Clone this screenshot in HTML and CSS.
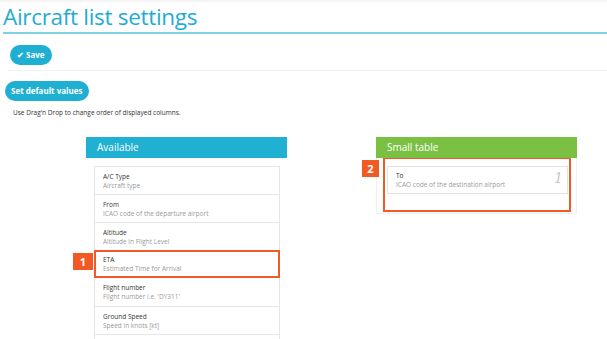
FILE: index.html
```html
<!DOCTYPE html>
<html lang="en">
<head>
    <meta charset="UTF-8">
    <title>Aircraft list settings</title>
    <link rel="stylesheet" href="styles.css">
</head>
<body>
    <h1 class="page-title">Aircraft list settings</h1>
    <div class="toolbar">
        <button class="btn"><span class="check">&#10004;</span>&nbsp;Save</button>
    </div>
    <div class="defaults">
        <button class="btn">Set default values</button>
    </div>
    <p class="hint">Use Drag'n Drop to change order of displayed columns.</p>

    <div class="columns">
        <div class="column">
            <div class="column-head available">Available</div>
            <ul class="field-list">
                <li class="field"><b>A/C Type</b><span>Aircraft type</span></li>
                <li class="field"><b>From</b><span>ICAO code of the departure airport</span></li>
                <li class="field"><b>Altitude</b><span>Altitude in Flight Level</span></li>
                <li class="field marked"><b>ETA</b><span>Estimated Time for Arrival</span><i class="badge">1</i></li>
                <li class="field"><b>Flight number</b><span>Flight number i.e. 'DY311'</span></li>
                <li class="field"><b>Ground Speed</b><span>Speed in knots [kt]</span></li>
                <li class="field"></li>
            </ul>
        </div>
        <div class="column">
            <div class="column-head small">Small table</div>
            <div class="drop-box">
                <div class="drop-zone">
                    <div class="field placed"><b>To</b><span>ICAO code of the destination airport</span><em class="order">1</em></div>
                    <i class="badge badge-2">2</i>
                </div>
            </div>
        </div>
    </div>
</body>
</html>
```

FILE: styles.css
```css
* {
    margin: 0;
    padding: 0;
    box-sizing: border-box;
}
body, html {
    height: 100%;
    font-family: "Open Sans", "DejaVu Sans", sans-serif;
    background-color: #fff;
    overflow: hidden;
}
body {
    border-top: 2px solid #f4f4f4;
}
.page-title {
    margin-left: 3px;
    height: 32px;
    padding-top: 1px;
    font-size: 22.5px;
    font-weight: 400;
    letter-spacing: -0.3px;
    color: #1fadd1;
    line-height: 28px;
    border-bottom: 2px solid #7fd2e3;
}
.toolbar {
    display: flex;
    margin-left: 8px;
    padding: 11px 0 5px 2px;
    border-bottom: 1px solid #f2f2f2;
}
.btn {
    height: 20px;
    padding: 0 7px;
    background-color: #1eafd2;
    color: #fff;
    border: none;
    border-radius: 10px;
    font-family: "Open Sans", sans-serif;
    font-size: 8px;
    font-weight: 700;
    line-height: 20px;
    cursor: pointer;
}
.check {
    font-size: 8px;
}
.defaults {
    display: flex;
    padding: 10px 0 0 5px;
}
.defaults .btn {
    padding: 0 7px 0 6px;
}
.hint {
    margin: 7px 0 0 13px;
    font-size: 6.5px;
    color: #333;
    line-height: 10px;
}
.columns {
    display: grid;
    grid-template-columns: 201px 201px;
    column-gap: 89px;
    margin: 19px 0 0 86px;
}
.column-head {
    height: 21px;
    padding-left: 11px;
    color: #fff;
    font-size: 10px;
    line-height: 21px;
}
.available {
    background-color: #1fb0d2;
}
.small {
    background-color: #7ac143;
}
.field-list {
    list-style: none;
    margin: 8px 7px 0 8px;
    border-left: 1px solid #e6e6e6;
    border-right: 1px solid #e6e6e6;
}
.field {
    position: relative;
    display: flex;
    flex-direction: column;
    justify-content: center;
    height: 28px;
    padding-left: 8px;
    border-top: 1px solid #e6e6e6;
    font-size: 6.5px;
    line-height: 9px;
}
.field b {
    font-weight: 400;
    color: #333;
}
.field span {
    color: #9a9a9a;
}
.field.marked {
    border: 2px solid #f05a28;
    margin: 0 -1px;
    padding-left: 7px;
}
.field.marked + .field {
    border-top: none;
}
.badge {
    position: absolute;
    left: -23px;
    top: 1px;
    width: 20px;
    height: 17px;
    background-color: #f15a22;
    color: #fff;
    font-style: normal;
    font-weight: 700;
    font-size: 11px;
    line-height: 17px;
    text-align: center;
}
.drop-box {
    height: 56px;
    border: 1px solid #f0f0f0;
    border-top: none;
}
.drop-zone {
    position: relative;
    height: 54px;
    margin: 0 5px 0 6px;
    padding: 7px 1px 0 2px;
    border: 2px solid #f05a28;
    border-top-width: 1px;
}
.field.placed {
    height: 28px;
    border: 1px solid #e2e2e2;
}
.order {
    position: absolute;
    right: 4px;
    top: 3px;
    font-size: 14px;
    line-height: 16px;
    color: #c8c8c8;
    font-family: "DejaVu Serif", serif;
}
.badge-2 {
    left: -23px;
    top: 1px;
    width: 17px;
    height: 17px;
}
```
